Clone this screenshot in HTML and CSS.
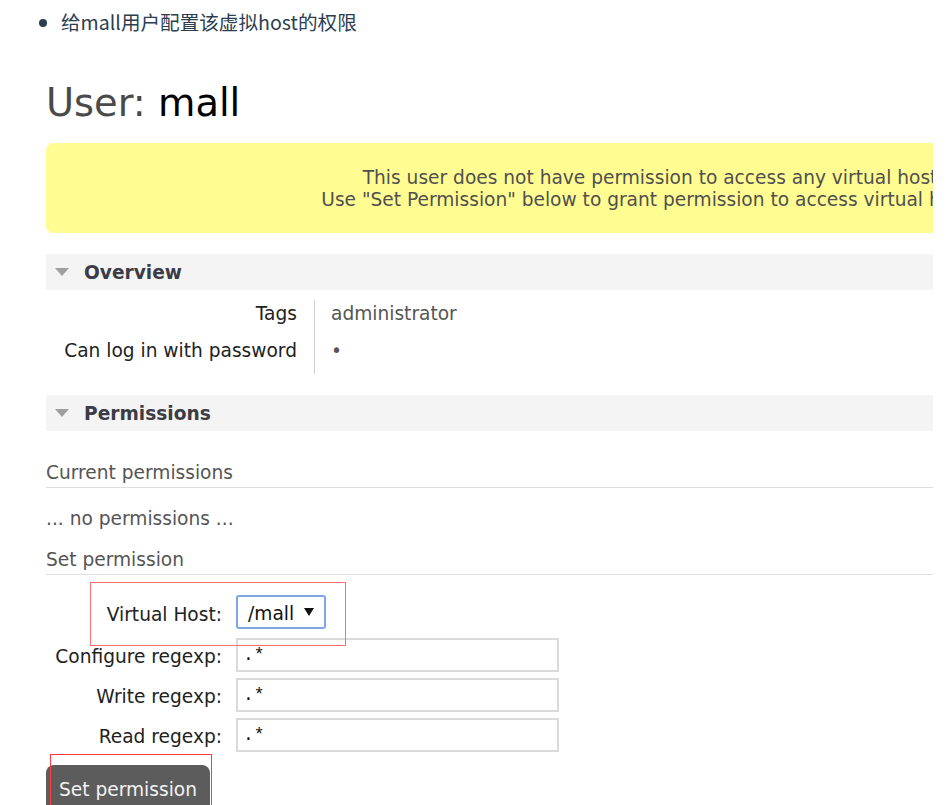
FILE: index.html
```html
<!DOCTYPE html>
<html lang="zh-CN">
<head>
<meta charset="utf-8">
<title>User: mall</title>
<link rel="stylesheet" href="styles.css">
</head>
<body>
<ul class="notes">
  <li>给mall用户配置该虚拟host的权限</li>
</ul>
<div class="shot">
  <div class="page">
    <h1 class="title"><span class="title-label">User:</span> <b class="title-name">mall</b></h1>
    <div class="warning">
      <p class="warning-text">This user does not have permission to access any virtual host.<br>Use "Set Permission" below to grant permission to access virtual hosts.</p>
    </div>

    <h2 class="section-head"><span class="tri"></span>Overview</h2>
    <div class="facts">
      <div class="fact-label">Tags</div>
      <div class="fact-value">administrator</div>
      <div class="fact-label">Can log in with password</div>
      <div class="fact-value">&#8226;</div>
    </div>

    <h2 class="section-head section-head-perm"><span class="tri"></span>Permissions</h2>
    <h3 class="sub-head sub-head-first">Current permissions</h3>
    <p class="empty">... no permissions ...</p>
    <h3 class="sub-head">Set permission</h3>

    <div class="perm-form">
      <div class="form-label">Virtual Host:</div>
      <div class="form-field">
        <div class="select">
          <span class="select-value">/mall</span>
          <svg class="select-arrow" width="10" height="8" viewBox="0 0 10 8"><path d="M0 0H10L5 8Z" fill="#111"/></svg>
        </div>
      </div>
      <div class="form-label">Configure regexp:</div>
      <div class="form-field"><div class="text-input">.*</div></div>
      <div class="form-label">Write regexp:</div>
      <div class="form-field"><div class="text-input">.*</div></div>
      <div class="form-label">Read regexp:</div>
      <div class="form-field"><div class="text-input">.*</div></div>
    </div>

    <div class="button-row"><span class="button">Set permission</span></div>
  </div>
  <div class="mark mark-vhost"></div>
  <div class="mark mark-button"></div>
</div>
</body>
</html>
```

FILE: styles.css
```css
html, body {
  margin: 0;
  padding: 0;
  background: #ffffff;
}

body {
  overflow: hidden;
  height: 805px;
}

.notes {
  margin: 8px 0 0;
  padding: 0 0 0 61px;
  font-family: "Noto Sans CJK SC", "Noto Sans", sans-serif;
  font-size: 19.6px;
  line-height: 28px;
  color: #2c3e50;
}

.shot {
  position: relative;
  margin-left: 46px;
  width: 887px;
  overflow: hidden;
  font-family: "DejaVu Sans", Verdana, sans-serif;
  font-size: 18.6px;
  color: #484848;
}

.page {
  width: 1214px;
}

.title {
  margin: 44px 0 17px;
  font-size: 38.4px;
  line-height: 46px;
  font-weight: normal;
  color: #4a4a4a;
}

.title-name {
  font-weight: normal;
  color: #000;
}

.warning {
  background: #fffd92;
  border-radius: 7px;
  padding: 24px 0 22px;
  text-align: center;
}

.warning-text {
  margin: 0;
  line-height: 22px;
  color: #505050;
}

.section-head {
  display: flex;
  align-items: center;
  margin: 21px 0 0;
  height: 36px;
  padding-left: 9px;
  background: #f4f4f4;
  font-size: 18.6px;
  font-weight: bold;
  color: #3c3c46;
}

.tri {
  width: 0;
  height: 0;
  border-left: 7.5px solid transparent;
  border-right: 7.5px solid transparent;
  border-top: 8px solid #a0a0a0;
  margin-right: 15px;
}

.facts {
  display: grid;
  grid-template-columns: 269px auto;
  margin-top: 10px;
  line-height: 22px;
}

.fact-label {
  padding: 2.5px 17px 12.5px 0;
  text-align: right;
  border-right: 1px solid #d0d0d0;
  color: #222;
}

.fact-value {
  padding: 2.5px 0 12.5px 16px;
  color: #555;
}

.section-head-perm {
  margin-top: 21px;
}

.sub-head {
  margin: 19px 0 0;
  padding-bottom: 3px;
  border-bottom: 1px solid #dddddd;
  font-size: 18.6px;
  line-height: 22px;
  font-weight: normal;
  color: #555;
}

.sub-head-first {
  margin-top: 31px;
}

.empty {
  margin: 20px 0 0;
  line-height: 22px;
  color: #555;
}

.perm-form {
  display: grid;
  grid-template-columns: 176px 323px;
  column-gap: 14px;
  row-gap: 6px;
  margin-top: 20px;
  width: 513px;
}

.form-label {
  align-self: center;
  padding-top: 3px;
  text-align: right;
  color: #222;
  line-height: 22px;
}

.select {
  display: flex;
  align-items: center;
  box-sizing: border-box;
  width: 90px;
  height: 34px;
  margin-bottom: 3px;
  padding: 2px 0 0 10px;
  border: 2px solid #7fa6e6;
  border-radius: 3px;
  background: #fff;
  color: #111;
}

.select-value {
  flex: 1;
}

.select-arrow {
  margin: 0 10px 2px 0;
}

.text-input {
  box-sizing: border-box;
  width: 323px;
  height: 34px;
  padding-left: 5px;
  border: 2px solid #dadada;
  background: #fff;
  font-family: "Liberation Mono", "DejaVu Sans Mono", monospace;
  font-size: 18px;
  line-height: 30px;
  color: #111;
}

.button-row {
  margin-top: 13px;
}

.button {
  display: inline-block;
  padding: 14px 13px 14px;
  line-height: 22px;
  background: #5c5c5c;
  color: #f2f2f2;
  border-radius: 8px 8px 0 0;
}

.mark {
  position: absolute;
  box-sizing: border-box;
}

.mark-vhost {
  left: 44px;
  top: 546px;
  width: 256px;
  height: 64px;
  border: 1.5px solid #ff6f6f;
}

.mark-button {
  left: 4px;
  top: 718px;
  width: 162px;
  height: 100px;
  border: 1px solid #ff3a3a;
}
```
